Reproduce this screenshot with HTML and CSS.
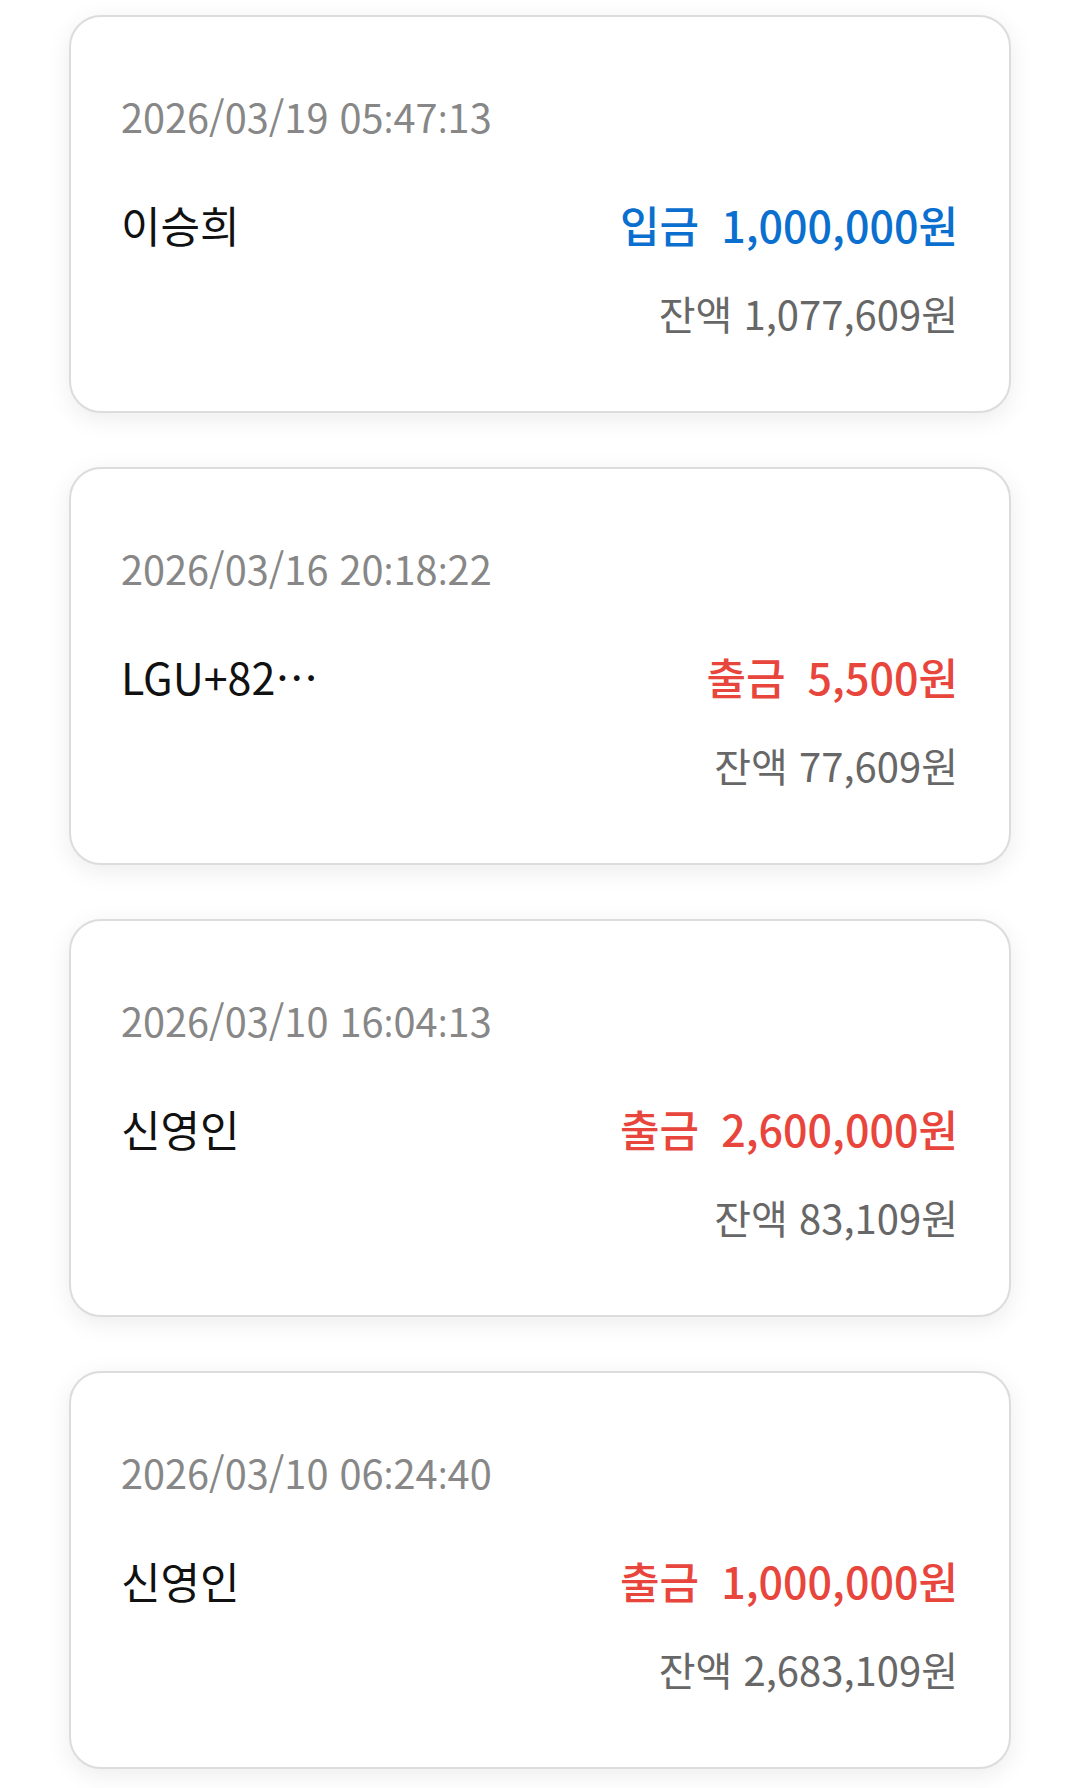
FILE: index.html
```html
<!DOCTYPE html>
<html lang="ko">
<head>
<meta charset="utf-8">
<link rel="stylesheet" href="styles.css">
</head>
<body>
<div class="list">
  <div class="card">
    <div class="date">2026/03/19 05<span class="colon">:</span>47<span class="colon">:</span>13</div>
    <div class="row">
      <div class="name">이승희</div>
      <div class="amount in"><span class="kind">입금</span>1,000,000원</div>
    </div>
    <div class="balance">잔액 1,077,609원</div>
  </div>
  <div class="card">
    <div class="date">2026/03/16 20<span class="colon">:</span>18<span class="colon">:</span>22</div>
    <div class="row">
      <div class="name">LGU+82…</div>
      <div class="amount out"><span class="kind">출금</span>5,500원</div>
    </div>
    <div class="balance">잔액 77,609원</div>
  </div>
  <div class="card">
    <div class="date">2026/03/10 16<span class="colon">:</span>04<span class="colon">:</span>13</div>
    <div class="row">
      <div class="name">신영인</div>
      <div class="amount out"><span class="kind">출금</span>2,600,000원</div>
    </div>
    <div class="balance">잔액 83,109원</div>
  </div>
  <div class="card">
    <div class="date">2026/03/10 06<span class="colon">:</span>24<span class="colon">:</span>40</div>
    <div class="row">
      <div class="name">신영인</div>
      <div class="amount out"><span class="kind">출금</span>1,000,000원</div>
    </div>
    <div class="balance">잔액 2,683,109원</div>
  </div>
</div>
</body>
</html>
```

FILE: styles.css
```css
html, body {
  margin: 0;
  padding: 0;
  background: #ffffff;
}
body {
  font-family: "Noto Sans CJK JP", "Noto Sans CJK KR", "Noto Sans", sans-serif;
  width: 1080px;
  height: 1788px;
  overflow: hidden;
}
.list {
  display: flex;
  flex-direction: column;
  gap: 54px;
  padding: 15px 69px 0 69px;
}
.card {
  background: #fff;
  border: 2px solid #dcdcdc;
  border-radius: 32px;
  box-shadow: 0 6px 24px rgba(0, 0, 0, 0.08);
  padding: 71px 51px 70px 50px;
  display: flex;
  flex-direction: column;
}
.date {
  font-size: 39.7px;
  color: #878787;
  line-height: 55px;
  height: 55px;
}
.colon {
  font-family: "Open Sans", "Noto Sans", sans-serif;
  font-size: 38px;
  line-height: 1;
}
.row {
  display: flex;
  justify-content: space-between;
  align-items: baseline;
  margin-top: 52px;
  line-height: 58px;
}
.name {
  font-size: 43px;
  color: #111;
}
.amount {
  font-size: 43px;
  font-weight: 500;
}
.amount .kind {
  margin-right: 22px;
}
.in { color: #0b6fcf; }
.out { color: #e8463c; }
.balance {
  margin-top: 33px;
  text-align: right;
  font-size: 40px;
  line-height: 55px;
  color: #676767;
}
```
